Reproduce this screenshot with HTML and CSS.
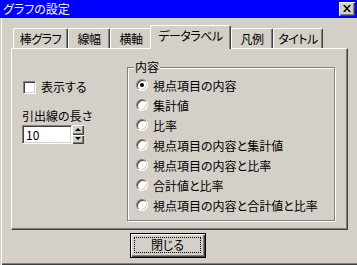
FILE: index.html
```html
<!DOCTYPE html>
<html lang="ja">
  <head>
    <meta charset="UTF-8">
    <title>グラフの設定</title>
    <link rel="stylesheet" href="styles.css">
  </head>
  <body>
    <div class="window">
      <div class="titlebar">
        <span class="title">グラフの設定</span>
        <span class="close-btn">
          <svg width="8" height="7" viewBox="0 0 8 7"><path d="M0 0h2l2 2.5 2-2.5h2l-3 3.5 3 3.5h-2l-2-2.5-2 2.5h-2l3-3.5z" fill="#000"/></svg>
        </span>
      </div>
      <div class="tabs">
        <div class="tab tab-bar">棒グラフ</div>
        <div class="tab">線幅</div>
        <div class="tab">横軸</div>
        <div class="tab tab-label active">データラベル</div>
        <div class="tab">凡例</div>
        <div class="tab tab-title">タイトル</div>
      </div>
      <div class="panel">
        <div class="left-col">
          <div class="check-row">
            <span class="checkbox"></span>
            <span>表示する</span>
          </div>
          <div class="field-label">引出線の長さ</div>
          <div class="spin">
            <div class="edit">10</div>
            <div class="spin-buttons">
              <span class="spin-btn"><span class="arrow-up"></span></span>
              <span class="spin-btn"><span class="arrow-down"></span></span>
            </div>
          </div>
        </div>
        <fieldset class="group">
          <legend>内容</legend>
          <div class="radio-row"><span class="radio checked"></span>視点項目の内容</div>
          <div class="radio-row"><span class="radio"></span>集計値</div>
          <div class="radio-row"><span class="radio"></span>比率</div>
          <div class="radio-row"><span class="radio"></span>視点項目の内容と集計値</div>
          <div class="radio-row"><span class="radio"></span>視点項目の内容と比率</div>
          <div class="radio-row"><span class="radio"></span>合計値と比率</div>
          <div class="radio-row"><span class="radio"></span>視点項目の内容と合計値と比率</div>
        </fieldset>
      </div>
      <div class="actions">
        <button class="btn"><span class="focus">閉じる</span></button>
      </div>
    </div>
  </body>
</html>
```

FILE: styles.css
```css
* {
    box-sizing: border-box;
}
body {
    margin: 0;
    background: #d4d0c8;
    font-family: "Noto Sans CJK JP", sans-serif;
    font-size: 12px;
    color: #000;
}
.window {
    width: 357px;
    height: 265px;
    background: #d4d0c8;
    display: flex;
    flex-direction: column;
    font-feature-settings: "palt";
    box-shadow: inset 1px 0 0 #d4d0c8, inset 2px 0 0 #fff, inset 0 -1px 0 #404040, inset 0 -2px 0 #808080;
}
.titlebar {
    height: 18px;
    background: #0000ff;
    color: #fff;
    display: flex;
    align-items: center;
    justify-content: space-between;
    padding: 0 2px 0 3px;
    line-height: 14px;
}
.close-btn {
    width: 16px;
    height: 14px;
    background: #d4d0c8;
    display: flex;
    align-items: center;
    justify-content: center;
    padding: 0 1px 1px 0;
    box-shadow: inset 1px 1px 0 #fff, inset -1px -1px 0 #404040, inset -2px -2px 0 #808080;
}
.close-btn svg {
    display: block;
}

/* tabs */
.tabs {
    display: flex;
    align-items: flex-end;
    height: 23px;
    margin: 7px 0 0 13px;
    position: relative;
    z-index: 1;
}
.tab {
    flex: none;
    width: 42px;
    height: 20px;
    display: flex;
    align-items: center;
    justify-content: center;
    background: #d4d0c8;
    border-top: 1px solid #fff;
    border-left: 1px solid #fff;
    border-right: 1px solid #404040;
    border-radius: 2px 2px 0 0;
    box-shadow: inset -1px 0 0 #808080;
    line-height: 14px;
    white-space: nowrap;
    letter-spacing: -0.5px;
}
.tab-bar {
    width: 55px;
}
.tab-label {
    width: 81px;
}
.tab-title {
    width: 50px;
}
.tab.active {
    height: 24px;
    margin: 0 0 -1px -2px;
    padding-bottom: 3px;
    position: relative;
}

/* panel */
.panel {
    width: 337px;
    height: 182px;
    margin-left: 11px;
    display: flex;
    border-top: 1px solid #fff;
    border-left: 1px solid #fff;
    border-right: 1px solid #404040;
    border-bottom: 1px solid #404040;
    box-shadow: inset -1px -1px 0 #808080;
}
.left-col {
    width: 115px;
    padding: 31px 0 0 10px;
    line-height: 14px;
}
.check-row {
    display: flex;
    align-items: center;
    gap: 5px;
    padding-left: 1px;
}
.checkbox {
    width: 13px;
    height: 13px;
    background: #fff;
    border: 1px solid;
    border-color: #808080 #fff #fff #808080;
    box-shadow: inset 1px 1px 0 #404040, inset -1px -1px 0 #d4d0c8;
}
.field-label {
    margin-top: 15px;
}
.spin {
    display: flex;
    margin-top: 2px;
    height: 19px;
}
.edit {
    width: 50px;
    background: #fff;
    border: 1px solid;
    border-color: #808080 #fff #fff #808080;
    box-shadow: inset 1px 1px 0 #404040, inset -1px -1px 0 #d4d0c8;
    padding: 2px 0 0 3px;
}
.spin-buttons {
    width: 12px;
    display: flex;
    flex-direction: column;
}
.spin-btn {
    flex: 1;
    display: flex;
    align-items: center;
    justify-content: center;
    background: #d4d0c8;
    box-shadow: inset 1px 1px 0 #fff, inset -1px -1px 0 #404040, inset -2px -2px 0 #808080;
    padding: 0 1px 1px 0;
}
.arrow-up {
    border-left: 3px solid transparent;
    border-right: 3px solid transparent;
    border-bottom: 3px solid #000;
}
.arrow-down {
    border-left: 3px solid transparent;
    border-right: 3px solid transparent;
    border-top: 3px solid #000;
}

/* group box */
.group {
    width: 208px;
    height: 161px;
    margin: 11px 0 0 0;
    padding: 1px 0 0 8px;
    border: 1px solid #808080;
    box-shadow: inset 1px 1px 0 #fff, 1px 1px 0 #fff;
}
.group legend {
    margin-left: -2px;
    padding: 0 1px;
    line-height: 14px;
    background: #d4d0c8;
}
.radio-row {
    height: 20px;
    display: flex;
    align-items: center;
    gap: 5px;
}
.radio {
    width: 12px;
    height: 12px;
    border-radius: 50%;
    background: #fff;
    border: 1px solid;
    border-color: #808080 #fff #fff #808080;
    box-shadow: inset 1px 1px 0 #404040, inset -1px -1px 0 #d4d0c8;
    display: flex;
    align-items: center;
    justify-content: center;
}
.radio.checked::after {
    content: "";
    width: 4px;
    height: 4px;
    border-radius: 50%;
    background: #000;
}

/* bottom */
.actions {
    padding: 3px 0 0 130px;
}
.btn {
    width: 76px;
    height: 25px;
    padding: 3px 4px 4px 3px;
    margin: 0;
    border: 1px solid #000;
    background: #d4d0c8;
    box-shadow: inset 1px 1px 0 #fff, inset -1px -1px 0 #404040, inset -2px -2px 0 #808080;
    font: inherit;
    color: #000;
    display: block;
}
.focus {
    display: flex;
    align-items: center;
    justify-content: center;
    height: 100%;
    border: 1px dotted #000;
    line-height: 14px;
}
```
